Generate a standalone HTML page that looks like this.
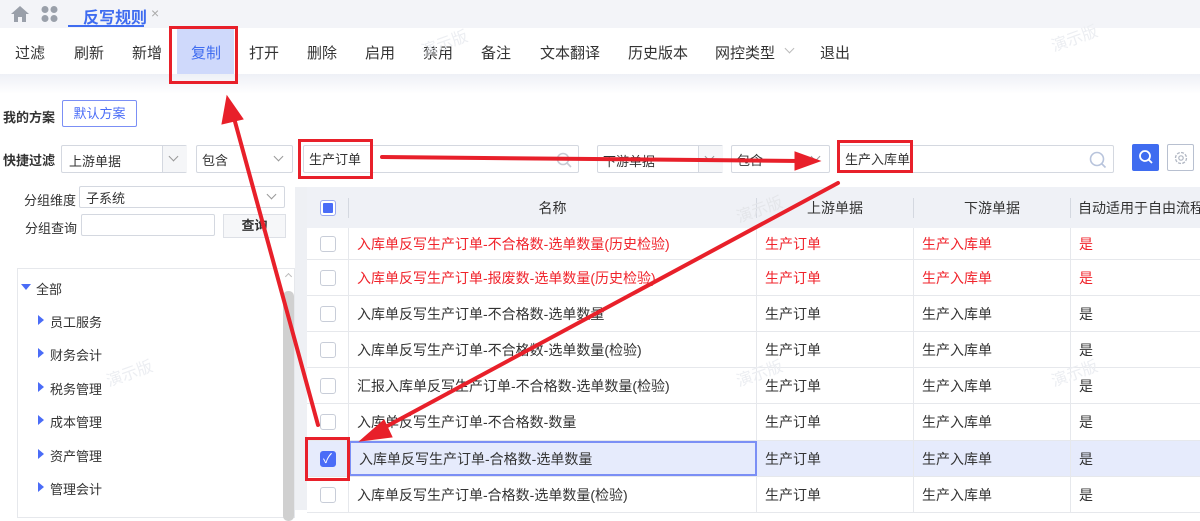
<!DOCTYPE html>
<html><head><meta charset="utf-8"><style>
*{margin:0;padding:0;box-sizing:border-box}
body{width:1200px;height:510px;overflow:hidden;position:relative;background:#fff;font-family:"Liberation Sans","Noto Sans CJK SC",sans-serif;color:#333;font-size:14px}
.a{position:absolute}
.tb span{position:absolute;top:42px;font-size:15px;color:#333}
.box{position:absolute;border:1px solid #d4d8e0;background:#fff;border-radius:2px}
.chev{position:absolute;width:7px;height:7px;border-right:1px solid #999;border-bottom:1px solid #999;transform:rotate(45deg)}
.red{position:absolute;border:3px solid #e8202a}
.row{position:absolute;left:307px;width:893px;border-bottom:1px solid #e6e8ec;font-size:14px}
.row>div{position:absolute;top:0;height:100%;display:flex;align-items:center;border-right:1px solid #e6e8ec;white-space:nowrap}
.cb{width:16px;height:16px;border:1px solid #c8cdd8;border-radius:3px;background:#fff;flex:none}
.tree span{position:absolute;font-size:13px;color:#333}
.tri{position:absolute;width:0;height:0;border-top:5px solid transparent;border-bottom:5px solid transparent;border-left:6px solid #4a6cf7}
</style></head><body>
<div class="a" style="left:0;top:0;width:1200px;height:28px;background:#f3f4f8"></div>
<svg class="a" style="left:10px;top:5px" width="20" height="18" viewBox="0 0 20 18"><path d="M10 1L1 9h3v8h4v-5h4v5h4V9h3z" fill="#9aa0aa"/></svg>
<svg class="a" style="left:40px;top:5px" width="20" height="18"><circle cx="5" cy="4.5" r="3.5" fill="#9aa0aa"/><circle cx="14" cy="4.5" r="3.5" fill="#9aa0aa"/><circle cx="5" cy="13.5" r="3.5" fill="#9aa0aa"/><circle cx="14" cy="13.5" r="3.5" fill="#9aa0aa"/></svg>
<div class="a" style="left:83px;top:4px;font-size:16px;font-weight:bold;color:#3f6cf0">反写规则</div>
<div class="a" style="left:151px;top:5px;font-size:14px;color:#aaa">×</div>
<div class="a" style="left:68px;top:25px;width:76px;height:2px;background:#3f6cf0"></div>
<div class="a" style="left:0;top:28px;width:1200px;height:46px;background:#fff"></div>
<div class="a" style="left:0;top:74px;width:1200px;height:20px;background:linear-gradient(#eef0f6,#fff)"></div>
<div class="a" style="left:177px;top:29px;width:57px;height:45px;background:#cfd9fb"></div>
<div class="tb">
<span style="left:15px">过滤</span><span style="left:74px">刷新</span><span style="left:132px">新增</span><span style="left:191px;color:#3f6cf0">复制</span><span style="left:249px">打开</span><span style="left:307px">删除</span><span style="left:365px">启用</span><span style="left:423px">禁用</span><span style="left:481px">备注</span><span style="left:540px">文本翻译</span><span style="left:628px">历史版本</span><span style="left:715px">网控类型</span><span style="left:820px">退出</span>
</div>
<div class="chev" style="left:786px;top:45px;border-color:#bbb"></div>
<div class="red" style="left:169px;top:26px;width:69px;height:58px"></div>
<div class="a" style="left:3px;top:107px;font-size:13px;font-weight:bold">我的方案</div>
<div class="a" style="left:62px;top:100px;width:75px;height:27px;border:1px solid #7b8ff5;border-radius:2px;color:#4a6cf7;font-size:13px;text-align:center;line-height:25px">默认方案</div>
<div class="a" style="left:3px;top:150px;font-size:13px;font-weight:bold">快捷过滤</div>
<div class="box" style="left:61px;top:145px;width:126px;height:28px"><span class="a" style="left:7px;top:5px;font-size:13px">上游单据</span><div class="a" style="left:100px;top:0;width:25px;height:26px;border-left:1px solid #d4d8e0;background:#f5f6f8"></div><div class="chev" style="left:108px;top:7px"></div></div>
<div class="box" style="left:196px;top:145px;width:97px;height:28px"><span class="a" style="left:5px;top:4px;font-size:13px">包含</span><div class="chev" style="left:78px;top:7px"></div></div>
<div class="box" style="left:303px;top:145px;width:276px;height:28px"><span class="a" style="left:5px;top:3px;font-size:13px">生产订单</span><svg class="a" style="left:252px;top:6px" width="16" height="16"><circle cx="7" cy="7" r="5.5" fill="none" stroke="#c7cbd3" stroke-width="1.6"/><path d="M11 11l4 4" stroke="#c7cbd3" stroke-width="1.6"/></svg></div>
<div class="red" style="left:298px;top:139px;width:75px;height:40px"></div>
<div class="box" style="left:597px;top:145px;width:126px;height:28px"><span class="a" style="left:5px;top:5px;font-size:13px">下游单据</span><div class="a" style="left:100px;top:0;width:25px;height:26px;border-left:1px solid #d4d8e0;background:#f5f6f8"></div><div class="chev" style="left:108px;top:7px"></div></div>
<div class="box" style="left:731px;top:145px;width:99px;height:28px"><span class="a" style="left:5px;top:4px;font-size:13px">包含</span><div class="chev" style="left:80px;top:7px"></div></div>
<div class="box" style="left:838px;top:145px;width:276px;height:28px"><span class="a" style="left:6px;top:3px;font-size:13px">生产入库单</span><svg class="a" style="left:250px;top:5px" width="18" height="18"><circle cx="8" cy="8" r="6.5" fill="none" stroke="#b8c4dc" stroke-width="1.6"/><path d="M12.5 12.5l4 4" stroke="#b8c4dc" stroke-width="1.6"/></svg></div>
<div class="red" style="left:837px;top:140px;width:76px;height:33px"></div>
<div class="a" style="left:1132px;top:144px;width:27px;height:27px;background:#3f6cf0;border-radius:2px"><svg class="a" style="left:6px;top:5px" width="16" height="17"><circle cx="7" cy="7" r="5" fill="none" stroke="#fff" stroke-width="1.8"/><path d="M10.5 10.5l3.5 3.5" stroke="#fff" stroke-width="1.8"/></svg></div>
<div class="a" style="left:1167px;top:144px;width:27px;height:27px;border:1px solid #b8c0d0;border-radius:2px"><svg class="a" style="left:5px;top:5px" width="16" height="16"><circle cx="8" cy="8" r="5.5" fill="none" stroke="#b0b6c2" stroke-width="1.3" stroke-dasharray="3 1.3"/><circle cx="8" cy="8" r="2.2" fill="none" stroke="#b0b6c2" stroke-width="1.2"/></svg></div>
<!-- left panel -->
<div class="a" style="left:24px;top:190px;font-size:13px">分组维度</div>
<div class="box" style="left:79px;top:186px;width:206px;height:22px"><span class="a" style="left:6px;top:1px;font-size:13px">子系统</span><div class="chev" style="left:188px;top:4px"></div></div>
<div class="a" style="left:25px;top:218px;font-size:13px">分组查询</div>
<div class="box" style="left:81px;top:214px;width:134px;height:22px"></div>
<div class="a" style="left:223px;top:214px;width:63px;height:24px;border:1px solid #dde0e6;background:#f6f7f9;font-size:13px;font-weight:bold;text-align:center;line-height:22px">查询</div>
<div class="a" style="left:17px;top:268px;width:278px;height:250px;border:1px solid #e6e8ec"></div>
<div class="a" style="left:283px;top:291px;width:11px;height:230px;background:#d0d0d0;border-radius:5px"></div>
<div class="chev" style="left:286px;top:274px;transform:rotate(225deg);width:5px;height:5px;border-color:#bbb"></div>
<div class="a" style="left:295px;top:187px;width:12px;height:323px;background:#eef0f4"></div>
<div class="tree">
<div class="a" style="left:21px;top:284px;border-left:5px solid transparent;border-right:5px solid transparent;border-top:6px solid #4a6cf7"></div>
<span style="left:36px;top:279px">全部</span>
<div class="tri" style="left:38px;top:315px"></div><span style="left:50px;top:312px">员工服务</span>
<div class="tri" style="left:38px;top:348px"></div><span style="left:50px;top:345px">财务会计</span>
<div class="tri" style="left:38px;top:382px"></div><span style="left:50px;top:379px">税务管理</span>
<div class="tri" style="left:38px;top:415px"></div><span style="left:50px;top:412px">成本管理</span>
<div class="tri" style="left:38px;top:449px"></div><span style="left:50px;top:446px">资产管理</span>
<div class="tri" style="left:38px;top:482px"></div><span style="left:50px;top:479px">管理会计</span>
</div>
<!-- table -->
<div class="row" style="top:187px;height:41px;background:#eff1f6;border:none">
<div style="left:0;width:42px;justify-content:center;border-right:1px solid #d4d8e0;height:20px;top:11px"><div class="cb" style="border-color:#9aa9f0;padding:2px"><div style="width:10px;height:10px;background:#4a6cf7;border-radius:1px"></div></div></div>
<div style="left:42px;width:408px;justify-content:center;border-right:1px solid #d4d8e0;height:20px;top:11px">名称</div>
<div style="left:450px;width:157px;justify-content:center;border-right:1px solid #d4d8e0;height:20px;top:11px">上游单据</div>
<div style="left:607px;width:157px;justify-content:center;border-right:1px solid #d4d8e0;height:20px;top:11px">下游单据</div>
<div style="left:764px;width:140px;padding-left:7px;border:none;height:20px;top:11px">自动适用于自由流程</div>
</div>
<div id="rows"></div>
<script>
var d=[["入库单反写生产订单-不合格数-选单数量(历史检验)",1],["入库单反写生产订单-报废数-选单数量(历史检验)",1],["入库单反写生产订单-不合格数-选单数量",0],["入库单反写生产订单-不合格数-选单数量(检验)",0],["汇报入库单反写生产订单-不合格数-选单数量(检验)",0],["入库单反写生产订单-不合格数-数量",0],["入库单反写生产订单-合格数-选单数量",2],["入库单反写生产订单-合格数-选单数量(检验)",0]];
var tops=[228,260,296,332,368,404,441,477],h="";
d.forEach(function(r,i){var c=r[1]==1?"#f0232b":"#333",bg=r[1]==2?"#e6ebfc":"#fff";
var cb=r[1]==2?'<div class="cb" style="background:#4a6cf7;border-color:#4a6cf7;color:#fff;font-size:13px;line-height:14px;text-align:center">✓</div>':'<div class="cb"></div>';
var nb=r[1]==2?"border:2px solid #7b8ff5;":"";
h+='<div class="row" style="top:'+tops[i]+'px;height:'+((tops[i+1]||513)-tops[i])+'px;background:'+bg+';color:'+c+'"><div style="left:0;width:42px;justify-content:center">'+cb+'</div><div style="left:42px;width:408px;padding-left:8px;'+nb+'">'+r[0]+'</div><div style="left:450px;width:157px;padding-left:8px">生产订单</div><div style="left:607px;width:157px;padding-left:8px">生产入库单</div><div style="left:764px;width:129px;padding-left:8px;border:none">是</div></div>';});
document.getElementById("rows").innerHTML=h;
</script>
<div class="red" style="left:305px;top:437px;width:45px;height:44px"></div>
<!-- watermarks -->
<div class="a" style="left:420px;top:30px;color:#eceef2;font-size:16px;transform:rotate(-20deg)">演示版</div>
<div class="a" style="left:1050px;top:25px;color:#eceef2;font-size:16px;transform:rotate(-20deg)">演示版</div>
<div class="a" style="left:735px;top:196px;color:#e4e6ea;font-size:16px;transform:rotate(-20deg)">演示版</div>
<div class="a" style="left:1050px;top:360px;color:#eceef2;font-size:16px;transform:rotate(-20deg)">演示版</div>
<div class="a" style="left:735px;top:360px;color:#eceef2;font-size:16px;transform:rotate(-20deg)">演示版</div>
<div class="a" style="left:105px;top:360px;color:#eceef2;font-size:16px;transform:rotate(-20deg)">演示版</div>
<!-- arrows -->
<svg class="a" style="left:0;top:0" width="1200" height="510">
<g stroke="#e8202a" stroke-width="4" fill="#e8202a" stroke-linecap="round">
<line x1="318" y1="425" x2="234" y2="118"/>
<polygon points="227,96 222,124 243,119" stroke-width="1"/>
<line x1="382" y1="157" x2="800" y2="161"/>
<polygon points="820,161 795,152 795,170" stroke-width="1"/>
<line x1="838" y1="183" x2="378" y2="431"/>
<polygon points="360,441 384,420 392,437" stroke-width="1"/>
</g></svg>
</body></html>
